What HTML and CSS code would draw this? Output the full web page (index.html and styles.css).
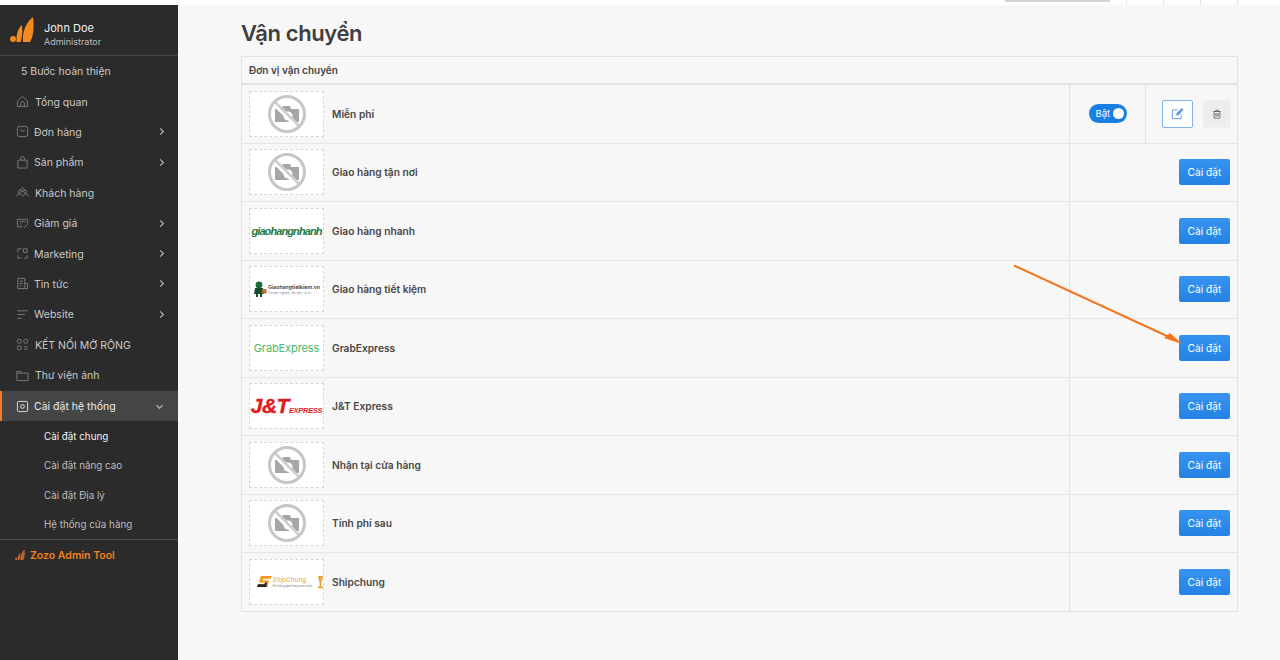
FILE: index.html
```html
<!DOCTYPE html>
<html lang="vi">
<head>
<meta charset="utf-8">
<title>Vận chuyển</title>
<link rel="stylesheet" href="styles.css">
</head>
<body>
<svg class="defs" width="0" height="0">
  <symbol id="nophoto" viewBox="0 0 40 40">
    <path d="M8 15h6l2-3h7l1 3h8v13H8z" fill="#a6a6a6"/>
    <circle cx="21" cy="22" r="4.500" fill="#fff"/>
    <path d="M6.500 8.500l25 25" stroke="#fff" stroke-width="5"/>
    <path d="M7 7l26 26" stroke="#cfcfcf" stroke-width="2.500"/>
    <circle cx="20" cy="20" r="17.500" fill="none" stroke="#c6c6c6" stroke-width="3"/>
  </symbol>
  <symbol id="chev" viewBox="0 0 10 10"><path d="M3.500 1.500L7 5 3.500 8.500" fill="none" stroke="currentColor" stroke-width="1.400"/></symbol>
  <symbol id="zlogo" viewBox="0 0 24 28">
    <path d="M13 26C12 18 15 7 23 1C24 8 24 20 20 26z" fill="currentColor"/>
    <path d="M6.500 26C6 19 8 12 12 9C12.500 15 12.500 21 10.500 26z" fill="currentColor"/>
    <circle cx="3" cy="23" r="3" fill="currentColor"/>
  </symbol>
</svg>

<div class="topstrip">
  <span class="strip-line"></span>
  <span class="strip-tick"></span>
  <span class="strip-tick"></span>
  <span class="strip-tick"></span>
  <span class="strip-tick"></span>
</div>

<div class="app">
  <aside class="sidebar">
    <div class="user">
      <svg class="user-logo"><use href="#zlogo"/></svg>
      <div class="user-text">
        <div class="user-name">John Doe</div>
        <div class="user-role">Administrator</div>
      </div>
    </div>
    <nav class="menu">
      <div class="item steps">5 Bước hoàn thiện</div>
      <div class="item"><svg class="ic" viewBox="0 0 14 14"><path d="M1.500 6.500L7 1.500l5.500 5v6h-11zM5 12.500V9a2 2 0 0 1 4 0v3.500"/></svg><span class="label shift">Tổng quan</span></div>
      <div class="item"><svg class="ic" viewBox="0 0 14 14"><rect x="1.500" y="1.500" width="11" height="11" rx="2"/><path d="M4.500 5c.5 2 4.500 2 5 0"/></svg><span class="label">Đơn hàng</span><svg class="chev"><use href="#chev"/></svg></div>
      <div class="item"><svg class="ic" viewBox="0 0 14 14"><path d="M2 4.500h10v8.500H2zM5 4.500V2.500a2 2 0 0 1 4 0v2"/></svg><span class="label">Sản phẩm</span><svg class="chev"><use href="#chev"/></svg></div>
      <div class="item"><svg class="ic" viewBox="0 0 14 14"><circle cx="4" cy="6" r="1.600"/><circle cx="10" cy="6" r="1.600"/><circle cx="7" cy="4" r="1.800"/><path d="M0.500 11c0-3 6-3 6 0M7.500 11c0-3 6-3 6 0"/></svg><span class="label shift">Khách hàng</span></div>
      <div class="item"><svg class="ic" viewBox="0 0 14 14"><path d="M12.500 7V2.500h-11v8H7"/><path d="M4 5h6M4 7.500h2M8.500 12l4-4M9 8.500h.5M12 11.500h.5"/></svg><span class="label">Giảm giá</span><svg class="chev"><use href="#chev"/></svg></div>
      <div class="item"><svg class="ic" viewBox="0 0 14 14"><path d="M2 6V2h4M2 9v3h4M8 2h4v4H8zM12 9v3H9"/></svg><span class="label">Marketing</span><svg class="chev"><use href="#chev"/></svg></div>
      <div class="item"><svg class="ic" viewBox="0 0 14 14"><path d="M2 1.500h7.500v11H2zM9.500 7H12.500v5.500H9.500M4 4.500h3.500M4 7h3.500M4 9.500h2"/></svg><span class="label">Tin tức</span><svg class="chev"><use href="#chev"/></svg></div>
      <div class="item"><svg class="ic" viewBox="0 0 14 14"><path d="M1.500 3h11M1.500 7h8M1.500 11h5"/></svg><span class="label">Website</span><svg class="chev"><use href="#chev"/></svg></div>
      <div class="item"><svg class="ic" viewBox="0 0 14 14"><rect x="1.500" y="1.500" width="4" height="4" rx="1"/><rect x="8.500" y="1.500" width="4" height="4" rx="1"/><rect x="1.500" y="8.500" width="4" height="4" rx="1"/><path d="M8.500 9.500h4M8.500 12h4"/></svg><span class="label shift">KẾT NỐI MỞ RỘNG</span></div>
      <div class="item"><svg class="ic" viewBox="0 0 14 14"><path d="M1 2.500h4l1 2h7v8H1zM1 4.500h5"/></svg><span class="label shift">Thư viện ảnh</span></div>
      <div class="item active"><svg class="ic" viewBox="0 0 14 14"><rect x="1.500" y="1.500" width="11" height="11" rx="1.500"/><circle cx="7" cy="7" r="2"/></svg><span class="label">Cài đặt hệ thống</span><svg class="chev down"><use href="#chev"/></svg></div>
      <div class="sub current">Cài đặt chung</div>
      <div class="sub">Cài đặt nâng cao</div>
      <div class="sub">Cài đặt Địa lý</div>
      <div class="sub">Hệ thống cửa hàng</div>
      <div class="tool"><svg class="tool-ic"><use href="#zlogo"/></svg>Zozo Admin Tool</div>
    </nav>
  </aside>

  <main class="content">
    <h1 class="title">Vận chuyển</h1>
    <section class="panel">
      <div class="panel-head">Đơn vị vận chuyển</div>

      <div class="row">
        <div class="cell-main"><div class="thumb"><svg class="noimg"><use href="#nophoto"/></svg></div><span class="name">Miễn phí</span></div>
        <div class="cell-toggle"><span class="toggle">Bật<i class="knob"></i></span></div>
        <div class="cell-ops">
          <button class="btn-edit"><svg viewBox="0 0 14 14"><path d="M11 8v4.500H1.500V3H7"/><path d="M5.500 9.500l.6-3L11.500 1l2 2L8.500 8.500z" fill="currentColor" stroke="none"/></svg></button>
          <button class="btn-del"><svg viewBox="0 0 12 12"><path d="M2.500 3h7v8h-7zM1.500 3h9M4.500 3V1.500h3V3M4.500 5v4M6 5v4M7.500 5v4"/></svg></button>
        </div>
      </div>

      <div class="row"><div class="cell-main"><div class="thumb"><svg class="noimg"><use href="#nophoto"/></svg></div><span class="name">Giao hàng tận nơi</span></div><div class="cell-act"><button class="btn">Cài đặt</button></div></div>

      <div class="row"><div class="cell-main"><div class="thumb"><span class="lg-ghn">giaohangnhanh</span></div><span class="name">Giao hàng nhanh</span></div><div class="cell-act"><button class="btn">Cài đặt</button></div></div>

      <div class="row"><div class="cell-main"><div class="thumb"><svg class="ghtk-man" viewBox="0 0 14 16"><circle cx="6" cy="4" r="3.400" fill="#1c6b3a"/><path d="M2 7h8l1 6H9v3H7v-3H5v3H3v-3H1z" fill="#174f2d"/><rect x="9" y="8" width="4.500" height="4.500" fill="#b8713a"/></svg><span class="lg-ghtk"><b>Giaohangtietkiem.vn</b><small>Chuyên nghiệp, tận tâm, uy tín</small></span></div><span class="name">Giao hàng tiết kiệm</span></div><div class="cell-act"><button class="btn">Cài đặt</button></div></div>

      <div class="row"><div class="cell-main"><div class="thumb"><span class="lg-grab">GrabExpress</span></div><span class="name">GrabExpress</span></div><div class="cell-act"><button class="btn">Cài đặt</button></div></div>

      <div class="row"><div class="cell-main"><div class="thumb"><span class="lg-jt">J&amp;T</span><span class="lg-jt-sub">EXPRESS</span></div><span class="name">J&amp;T Express</span></div><div class="cell-act"><button class="btn">Cài đặt</button></div></div>

      <div class="row"><div class="cell-main"><div class="thumb"><svg class="noimg"><use href="#nophoto"/></svg></div><span class="name">Nhận tại cửa hàng</span></div><div class="cell-act"><button class="btn">Cài đặt</button></div></div>

      <div class="row"><div class="cell-main"><div class="thumb"><svg class="noimg"><use href="#nophoto"/></svg></div><span class="name">Tính phí sau</span></div><div class="cell-act"><button class="btn">Cài đặt</button></div></div>

      <div class="row"><div class="cell-main"><div class="thumb"><svg class="sc-mark" viewBox="0 0 16 14"><path d="M4 1h12l-1.500 3H7L6 6h7l-2 7H0l1-3h7l.5-2H2z" fill="#f29a1f"/><path d="M1 10h7l.5-2h2L10 13H0z" fill="#222"/></svg><span class="lg-sc"><b>ShipChung</b><small>Hệ thống giao hàng toàn quốc</small></span><svg class="sc-cup" viewBox="0 0 8 16"><path d="M1 1h6L5 9v4h2v2H1v-2h2V9z" fill="#e9a23c"/></svg></div><span class="name">Shipchung</span></div><div class="cell-act"><button class="btn">Cài đặt</button></div></div>
    </section>
  </main>
</div>

<svg class="arrow" viewBox="0 0 1280 660">
  <path d="M1014 265.500L1168 336.500" stroke="#f5741c" stroke-width="2" fill="none"/>
  <path d="M1182 344L1164 338L1170 333z" fill="#f5741c"/>
</svg>
</body>
</html>
```
FILE: styles.css
```css
* { box-sizing: border-box; }
html, body { margin: 0; height: 100%; }
body {
  width: 1280px;
  height: 660px;
  overflow: hidden;
  background: #f7f7f7;
  font-family: Inter, "Liberation Sans", sans-serif;
  color: #3d3d3d;
  position: relative;
}
.defs { position: absolute; }

.topstrip {
  height: 5px;
  background: #fff;
  display: flex;
  align-items: flex-start;
  padding-left: 1005px;
  gap: 36px;
}
.strip-line { width: 105px; height: 2px; background: #d4d4d4; margin-right: -20px; }
.strip-tick { width: 1px; height: 5px; background: #e8e8e8; }

.app { display: flex; height: 655px; }

.sidebar {
  width: 178px;
  flex: none;
  background: #2b2b2b;
  color: #c8c8c8;
}
.user {
  height: 51px;
  display: flex;
  align-items: center;
  gap: 10px;
  padding-left: 10px;
  border-bottom: 1px solid #444;
}
.user-logo { width: 24px; height: 28px; color: #f58a1f; flex: none; }
.user-text { padding-top: 8px; }
.user-name { font-size: 11px; line-height: 14px; color: #f0f0f0; }
.user-role { font-size: 9px; line-height: 13px; color: #bdbdbd; }

.menu { display: flex; flex-direction: column; }
.item {
  height: 30.400px;
  flex: none;
  display: flex;
  align-items: center;
  padding: 0 12px 0 16px;
  font-size: 10.500px;
  color: #c9c9c9;
}
.steps { padding-left: 21px; }
.ic {
  width: 13px;
  height: 13px;
  flex: none;
  fill: none;
  stroke: #7d7d7d;
  stroke-width: 1;
  margin-right: 5px;
}
.label { flex: 1; padding-top: 1px; }
.shift { padding-left: 1px; }
.chev { width: 9px; height: 9px; color: #b5b5b5; flex: none; }
.down { transform: rotate(90deg); margin-right: 2px; }
.active {
  background: #454545;
  color: #ececec;
  border-left: 2px solid #f47b20;
  padding-left: 14px;
  height: 30px;
  margin-top: 1px;
}
.active .ic { stroke: #e6e6e6; }
.sub {
  height: 29.400px;
  flex: none;
  display: flex;
  align-items: center;
  padding: 1px 0 0 44px;
  font-size: 9.800px;
  color: #bdbdbd;
}
.current { color: #f2f2f2; }
.tool {
  height: 31px;
  display: flex;
  align-items: center;
  gap: 5px;
  padding: 1px 0 0 15px;
  border-top: 1px solid #4c4c4c;
  font-size: 10.500px;
  font-weight: 600;
  color: #f2801e;
}
.tool-ic { width: 10px; height: 12px; color: #b9642a; }

.content { flex: 1; padding: 0 42px 0 63px; }
.title {
  margin: 0;
  height: 51px;
  padding-top: 11px;
  font-size: 22px;
  line-height: 34px;
  font-weight: 600;
  letter-spacing: -0.400px;
  color: #3f3f3f;
}
.panel { border: 1px solid #e2e2e2; border-top-color: #e4e4e4; }
.panel-head {
  height: 28px;
  padding-left: 7px;
  display: flex;
  align-items: center;
  font-size: 10px;
  font-weight: 600;
  border-bottom: 2px solid #e2e2e2;
  color: #444;
}
.row {
  height: 58.500px;
  display: flex;
  border-bottom: 1px solid #e6e6e6;
}
.row:last-child { border-bottom: 0; height: 57.500px; }
.cell-main {
  width: 828px;
  display: flex;
  align-items: center;
  padding-left: 7px;
  gap: 8px;
  border-right: 1px solid #e2e2e2;
}
.thumb {
  width: 75px;
  height: 46px;
  background: #fff;
  border: 1px dashed #d8d8d8;
  display: flex;
  align-items: center;
  justify-content: center;
  position: relative;
  overflow: hidden;
}
.name { font-size: 10.200px; font-weight: 600; color: #474747; }
.noimg { width: 40px; height: 40px; }

.cell-toggle {
  width: 76px;
  display: flex;
  align-items: center;
  justify-content: center;
  border-right: 1px solid #e2e2e2;
}
.toggle {
  width: 38px;
  height: 19px;
  border-radius: 10px;
  background: #1a7fe4;
  color: #fff;
  font-size: 9.500px;
  display: flex;
  align-items: center;
  justify-content: space-between;
  padding: 0 3px 0 7px;
}
.knob { width: 11px; height: 11px; border-radius: 50%; background: #fff; }
.cell-ops {
  flex: 1;
  display: flex;
  align-items: center;
  gap: 10px;
  padding-left: 16px;
}
.btn-edit {
  width: 31px;
  height: 28px;
  background: #fff;
  border: 1px solid #7fb2ee;
  border-radius: 2px;
  padding: 0;
  color: #5c9be6;
  display: flex;
  align-items: center;
  justify-content: center;
}
.btn-edit svg { width: 13px; height: 13px; fill: none; stroke: currentColor; stroke-width: 1; }
.btn-del {
  width: 28px;
  height: 28px;
  background: #ededed;
  border: 1px solid #f2f2f2;
  border-radius: 2px;
  padding: 0;
  display: flex;
  align-items: center;
  justify-content: center;
}
.btn-del svg { width: 10px; height: 10px; fill: none; stroke: #666; stroke-width: 1; }
.cell-act {
  flex: 1;
  display: flex;
  align-items: center;
  justify-content: flex-end;
  padding-right: 7px;
}
.btn {
  width: 51px;
  height: 26px;
  border: 0;
  border-radius: 2px;
  background: linear-gradient(#3793f0, #2382e4);
  color: #fff;
  font-family: inherit;
  font-size: 10.200px;
  padding: 0;
}

.lg-ghn {
  font-family: "Liberation Sans", sans-serif;
  font-style: italic;
  font-weight: 700;
  font-size: 11px;
  letter-spacing: -0.900px;
  color: #1d7a45;
}
.ghtk-man { width: 14px; height: 16px; flex: none; margin-right: 1px; }
.lg-ghtk { display: flex; flex-direction: column; }
.lg-ghtk b { font-size: 5.200px; line-height: 7px; font-weight: 600; color: #333; white-space: nowrap; }
.lg-ghtk small { font-size: 3px; line-height: 4px; color: #888; white-space: nowrap; }
.lg-grab { font-size: 11px; color: #4bb868; letter-spacing: -0.100px; }
.lg-jt {
  font-family: "Liberation Sans", sans-serif;
  font-style: italic;
  font-weight: 700;
  font-size: 21px;
  letter-spacing: -0.500px;
  color: #e01b22;
  -webkit-text-stroke: 0.400px #e01b22;
  padding-bottom: 1px;
}
.lg-jt-sub {
  font-family: "Liberation Sans", sans-serif;
  font-style: italic;
  font-weight: 700;
  font-size: 7.500px;
  letter-spacing: -0.300px;
  color: #e01b22;
  padding-top: 9px;
}
.sc-mark { width: 15px; height: 13px; flex: none; margin: 0 1px 0 8px; }
.lg-sc { display: flex; flex-direction: column; }
.lg-sc b { font-size: 6.500px; line-height: 8px; font-style: italic; font-weight: 400; color: #e8a24a; white-space: nowrap; }
.lg-sc small { font-size: 2.800px; line-height: 4px; color: #777; white-space: nowrap; }
.sc-cup { width: 7px; height: 14px; margin-left: 5px; flex: none; }

.arrow {
  position: absolute;
  left: 0;
  top: 0;
  width: 1280px;
  height: 660px;
  pointer-events: none;
}
```
